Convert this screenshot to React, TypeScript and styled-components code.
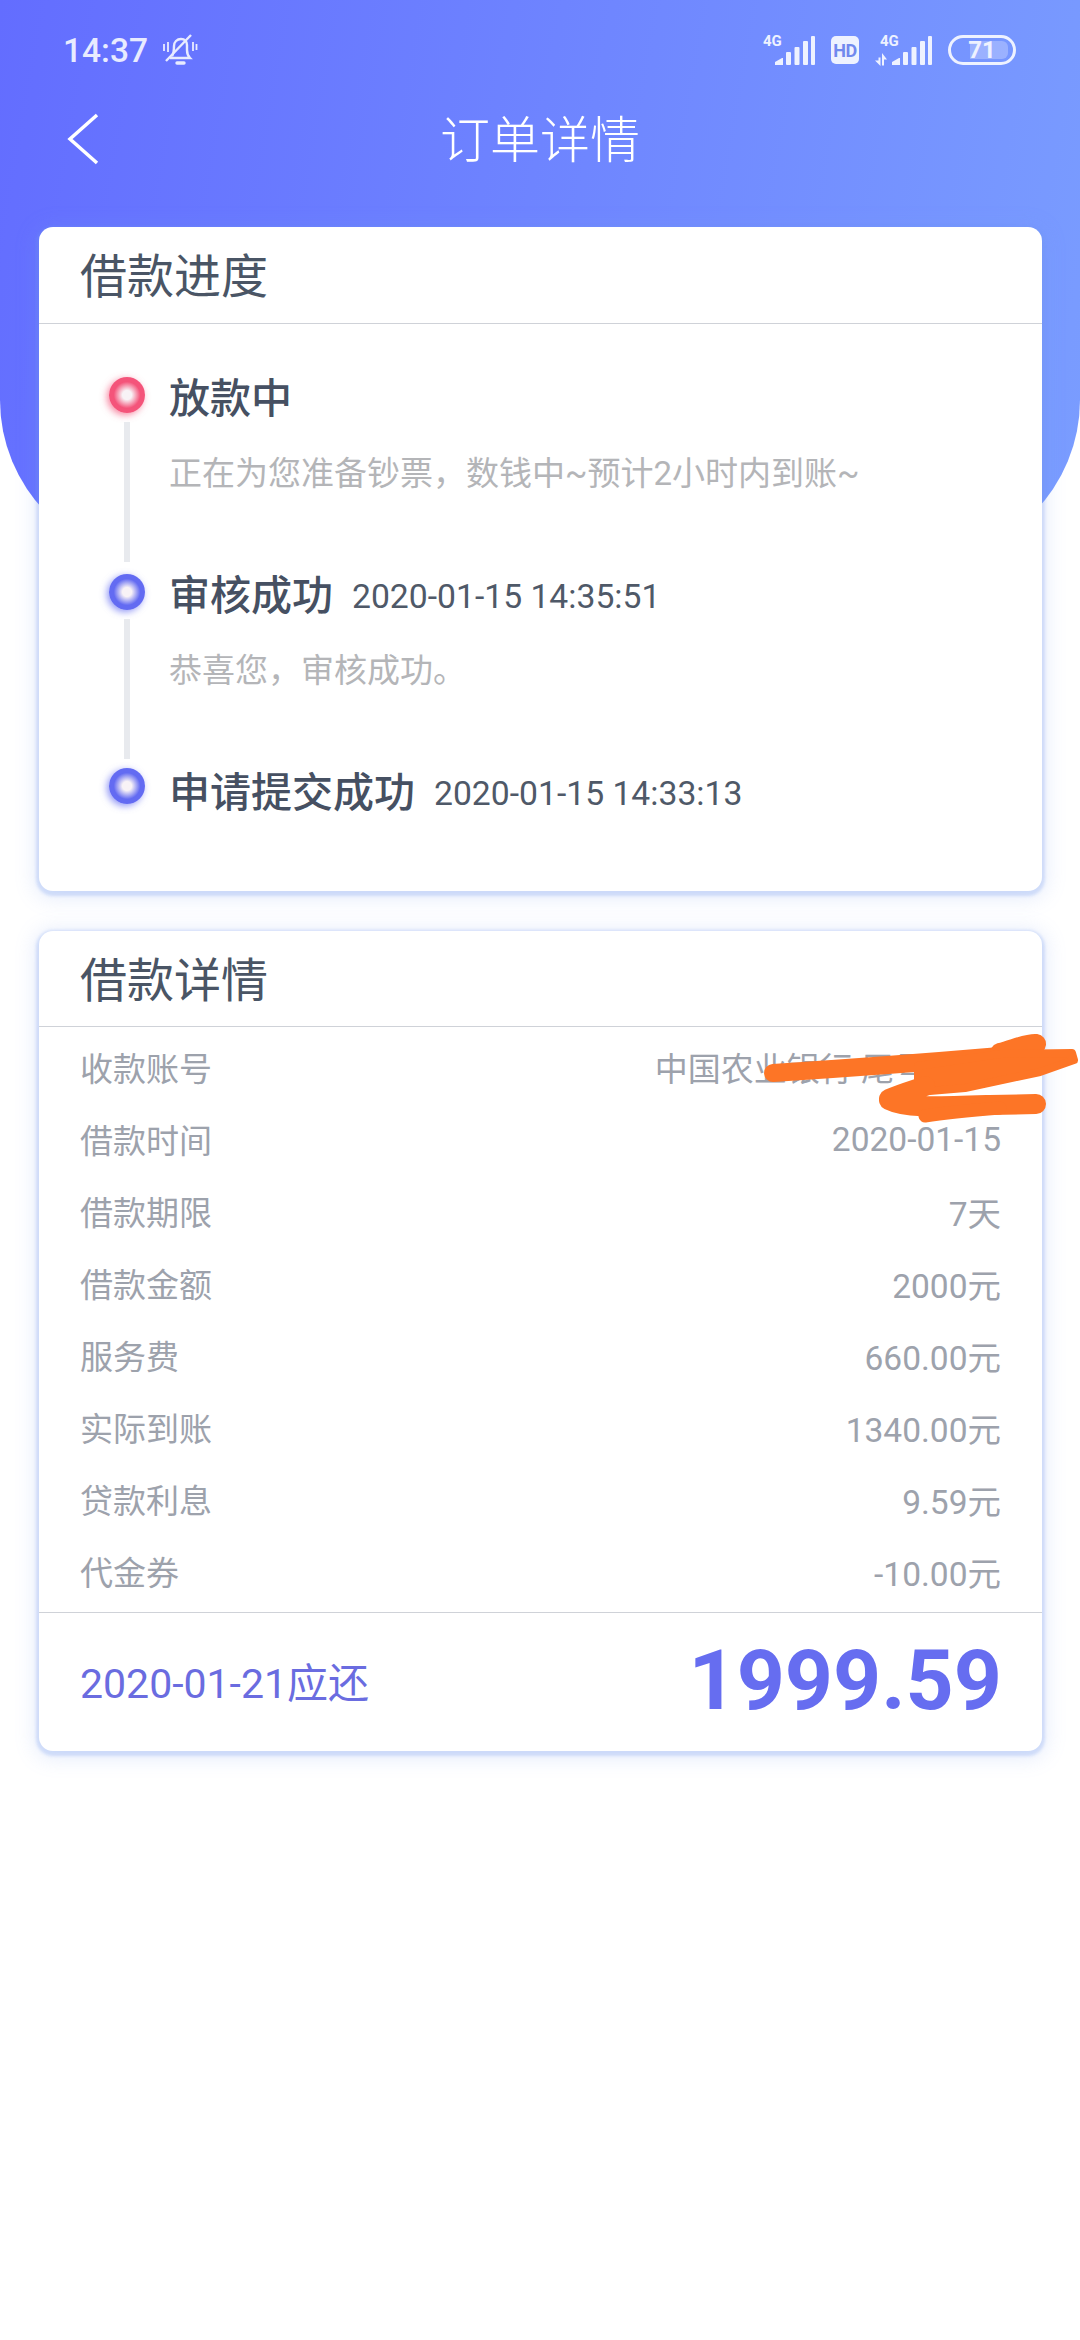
import React from 'react';
import styled, { createGlobalStyle } from 'styled-components';

const GlobalStyle = createGlobalStyle`
  html, body {
    margin: 0;
    padding: 0;
    background: #fff;
  }
  * {
    box-sizing: border-box;
  }
`;

const fontStack = `Roboto, "Noto Sans CJK SC", sans-serif`;

const Page = styled.div`
  position: relative;
  width: 1080px;
  height: 2340px;
  overflow: hidden;
  background: #fff;
  font-family: ${fontStack};

  &::before {
    content: '';
    position: absolute;
    top: 0;
    left: 0;
    width: 1080px;
    height: 560px;
    border-radius: 0 0 160px 160px;
    background: linear-gradient(100deg, #636dff 0%, #7a9dff 100%);
  }
`;

const Content = styled.div`
  position: relative;
  display: flex;
  flex-direction: column;
`;

const StatusBar = styled.div`
  display: flex;
  justify-content: space-between;
  align-items: center;
  height: 100px;
  padding: 0 64px 0 63px;
  color: #e8ebff;
`;

const StatusLeft = styled.div`
  display: flex;
  align-items: center;
  gap: 14px;
`;

const Clock = styled.span`
  font-size: 33.5px;
  font-weight: 500;
`;

const StatusRight = styled.div`
  display: flex;
  align-items: center;
  gap: 16px;
`;

const SignalSvg = styled.svg`
  margin-top: -6px;
`;

const HdBadge = styled.span`
  display: flex;
  align-items: center;
  justify-content: center;
  width: 28px;
  height: 28px;
  border-radius: 5px;
  background: #eef2ff;
  color: #7189ee;
  font-size: 18px;
  font-weight: 700;
  letter-spacing: -0.5px;
`;

const Battery = styled.span`
  position: relative;
  display: flex;
  align-items: center;
  justify-content: center;
  width: 68px;
  height: 30px;
  border: 3px solid #eef2ff;
  border-radius: 15px;
  color: #eef2ff;
  font-size: 24px;
  font-weight: 700;

  &::before {
    content: '';
    position: absolute;
    top: 3px;
    bottom: 3px;
    left: 19px;
    width: 38px;
    border-radius: 0 6px 6px 0;
    background: rgba(238, 242, 255, 0.3);
  }
`;

const BatteryLevel = styled.span`
  position: relative;
`;

const NavBar = styled.div`
  position: relative;
  display: flex;
  align-items: center;
  justify-content: center;
  height: 74px;
`;

const BackIcon = styled.svg`
  position: absolute;
  left: 65px;
  top: 12px;
`;

const NavTitle = styled.h1`
  margin: -3px 0 0;
  color: #fff;
  font-size: 50px;
  font-weight: 300;
`;

const Card = styled.section<{ $height: number; $top: number }>`
  display: flex;
  flex-direction: column;
  height: ${(props) => props.$height}px;
  margin: ${(props) => props.$top}px 38px 0 39px;
  border-radius: 14px;
  background: #fff;
  box-shadow: 0 2px 3px 3px rgba(110, 150, 240, 0.25), 0 3px 20px 5px rgba(120, 155, 240, 0.18);
`;

const CardHeader = styled.h2<{ $height: number }>`
  flex: none;
  margin: 0;
  height: ${(props) => props.$height}px;
  padding-left: 41px;
  border-bottom: 1px solid #cfd2d8;
  color: #4a5565;
  font-size: 47px;
  font-weight: 400;
  line-height: ${(props) => props.$height + 3}px;
`;

const Timeline = styled.div`
  padding: 41px 0 0 70px;
`;

const Step = styled.div<{ $height: number }>`
  display: flex;
  gap: 24px;
  height: ${(props) => props.$height}px;
`;

const Rail = styled.div`
  display: flex;
  flex-direction: column;
  align-items: center;
  width: 36px;
`;

const Dot = styled.span<{ $color: string; $lift?: number }>`
  flex: none;
  width: 36px;
  height: 36px;
  margin-top: ${(props) => 12 - (props.$lift ?? 0)}px;
  border-radius: 50%;
  background: radial-gradient(circle, #f8f2f6 0 18%, ${(props) => props.$color} 52%);
  box-shadow: -2px 2px 7px ${(props) => props.$color}b0;
`;

const Connector = styled.span`
  flex: 1;
  width: 6px;
  margin-top: 9px;
  background: #e8eaee;
`;

const StepBody = styled.div`
  display: flex;
  flex-direction: column;
`;

const StepHead = styled.div`
  display: flex;
  align-items: center;
  gap: 19px;
  height: 60px;
`;

const StepTitle = styled.span`
  color: #465062;
  font-size: 41px;
  font-weight: 500;
`;

const StepTime = styled.span`
  color: #4f5968;
  font-size: 33.7px;
  margin-top: 8px;
`;

const StepNote = styled.p`
  margin: 24px 0 0;
  color: #b4b5b8;
  font-size: 33px;
  line-height: 50px;
`;

const Rows = styled.div`
  display: flex;
  flex-direction: column;
  padding-top: 4px;
`;

const Row = styled.div`
  display: flex;
  justify-content: space-between;
  align-items: center;
  height: 72px;
  padding: 0 41px;
  color: #9da2ac;
  font-size: 33.5px;
`;

const RowLabel = styled.span`
  font-size: 33px;
`;

const HiddenDigits = styled.span`
  display: inline-block;
  width: 74px;
`;

const Footer = styled.div`
  display: flex;
  justify-content: space-between;
  align-items: center;
  flex: 1;
  margin-top: 5px;
  padding: 0 40px 3px 41px;
  border-top: 1px solid #cfd2d8;
`;

const DueDate = styled.span`
  margin-bottom: 1px;
  color: #6a6ce0;
  font-size: 41px;
`;

const Amount = styled.span`
  color: #666df0;
  font-size: 84px;
  font-weight: 700;
`;

const Scribble = styled.svg`
  position: absolute;
  top: 1020px;
  left: 740px;
`;

const SignalIcon: React.FC<{ arrows?: boolean }> = ({ arrows }) => {
  const start = arrows ? 17 : 12;
  return (
    <SignalSvg width={start + 40} height="37" viewBox={`0 -6 ${start + 40} 37`} fill="#eef2ff">
      <text x={arrows ? 5 : 0} y="11" fontSize="15" fontWeight="700" fontFamily="Roboto, sans-serif">
        4G
      </text>
      {arrows && <path d="M0 25.500h3.500v-3h2v8.500zM7 30.500V18l5 6.500H9v6z" />}
      <g transform={`translate(${start} 0)`}>
        <path d="M0 30v-3l7-4h1v7z" />
        <rect x="11" y="17" width="5" height="13" rx="1" />
        <rect x="19.500" y="12" width="5" height="18" rx="1" />
        <rect x="28" y="6" width="5" height="24" rx="1" />
        <rect x="36" y="1" width="4" height="29" rx="1" />
      </g>
    </SignalSvg>
  );
};

const details = [
  ['借款时间', '2020-01-15'],
  ['借款期限', '7天'],
  ['借款金额', '2000元'],
  ['服务费', '660.00元'],
  ['实际到账', '1340.00元'],
  ['贷款利息', '9.59元'],
  ['代金券', '-10.00元'],
];

export default function App() {
  return (
    <Page>
      <GlobalStyle />
      <Content>
        <StatusBar>
          <StatusLeft>
            <Clock>14:37</Clock>
            <svg width="36" height="36" viewBox="0 0 36 36" fill="none" stroke="#e8ebff" strokeWidth="2.400">
              <path d="M10 24c2-3 2-6 2-10 0-4 3-7 7-7s6 3 6 6v5c0 3 1 6 3 8H8" />
              <path d="M15 31h7" strokeWidth="3.400" strokeLinecap="round" />
              <path d="M4 29L29 3" />
              <path d="M2 12v7M6 10v10M31 10v9M34.500 12v6" strokeWidth="1.800" />
            </svg>
          </StatusLeft>
          <StatusRight>
            <SignalIcon />
            <HdBadge>HD</HdBadge>
            <SignalIcon arrows />
            <Battery>
              <BatteryLevel>71</BatteryLevel>
            </Battery>
          </StatusRight>
        </StatusBar>

        <NavBar>
          <BackIcon width="36" height="54" viewBox="0 0 36 54" fill="none" stroke="#fff" strokeWidth="3.500">
            <path d="M32 3L5 27l27 24" />
          </BackIcon>
          <NavTitle>订单详情</NavTitle>
        </NavBar>

        <Card $height={664} $top={53}>
          <CardHeader $height={97}>借款进度</CardHeader>
          <Timeline>
            <Step $height={197}>
              <Rail>
                <Dot $color="#f4547a" />
                <Connector />
              </Rail>
              <StepBody>
                <StepHead>
                  <StepTitle>放款中</StepTitle>
                </StepHead>
                <StepNote>正在为您准备钞票，数钱中~预计2小时内到账~</StepNote>
              </StepBody>
            </Step>
            <Step $height={197}>
              <Rail>
                <Dot $color="#636bf2" />
                <Connector />
              </Rail>
              <StepBody>
                <StepHead>
                  <StepTitle>审核成功</StepTitle>
                  <StepTime>2020-01-15 14:35:51</StepTime>
                </StepHead>
                <StepNote>恭喜您，审核成功。</StepNote>
              </StepBody>
            </Step>
            <Step $height={72}>
              <Rail>
                <Dot $color="#636bf2" $lift={3} />
              </Rail>
              <StepBody>
                <StepHead>
                  <StepTitle>申请提交成功</StepTitle>
                  <StepTime>2020-01-15 14:33:13</StepTime>
                </StepHead>
              </StepBody>
            </Step>
          </Timeline>
        </Card>

        <Card $height={820} $top={40}>
          <CardHeader $height={96}>借款详情</CardHeader>
          <Rows>
            <Row>
              <RowLabel>收款账号</RowLabel>
              <RowLabel>
                中国农业银行 尾号
                <HiddenDigits />
              </RowLabel>
            </Row>
            {details.map(([label, value]) => (
              <Row key={label}>
                <RowLabel>{label}</RowLabel>
                <span>{value}</span>
              </Row>
            ))}
          </Rows>
          <Footer>
            <DueDate>2020-01-21应还</DueDate>
            <Amount>1999.59</Amount>
          </Footer>
        </Card>
      </Content>

      <Scribble width="340" height="110" viewBox="740 1020 340 110" fill="none" stroke="#fd7526" strokeWidth="18" strokeLinecap="round" strokeLinejoin="round">
        <path d="M773 1073C850 1068 930 1062 1000 1056" />
        <path d="M1000 1053C1015 1049 1028 1043 1036 1044" strokeWidth="20" />
        <path d="M1000 1054L1072 1053L1074 1060L1040 1072L965 1088L918 1092L918 1066Z" fill="#fd7526" strokeWidth="8" />
        <path d="M889 1099C905 1092 915 1090 925 1086M889 1100C905 1108 930 1107 990 1105L1036 1104" strokeWidth="20" />
        <path d="M925 1116C950 1112 975 1110 1000 1108" strokeWidth="13" />
      </Scribble>
    </Page>
  );
}
